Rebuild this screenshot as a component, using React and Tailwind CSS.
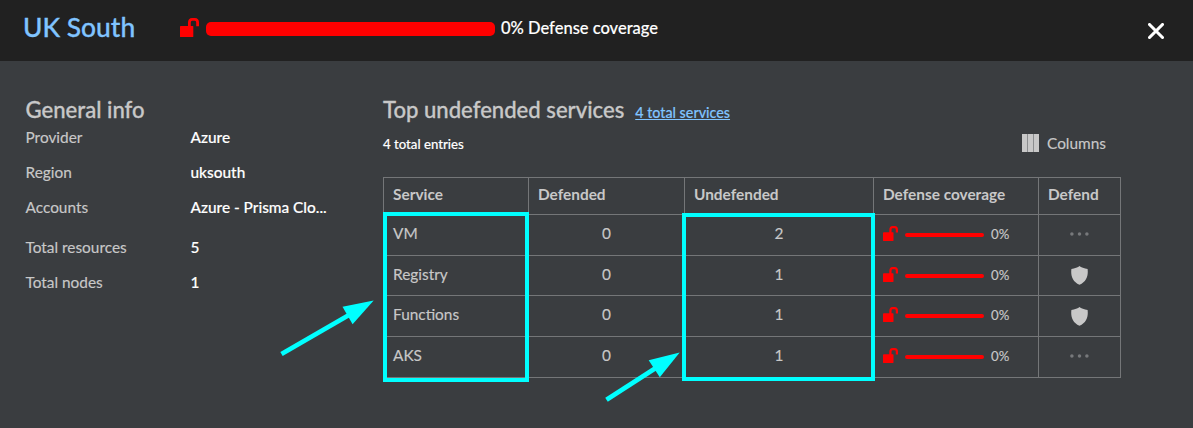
import React from "react";

function Unlock({ className }) {
  return (
    <svg viewBox="0 0 19 19" className={className} aria-hidden="true">
      <rect x="0" y="8" width="13.3" height="11" rx="0.6" fill="#ff0000" />
      <path d="M9.4 9V4.6Q9.4 1.4 12.2 1.4H14.8Q17.6 1.4 17.6 4.6V8.2" fill="none" stroke="#ff0000" strokeWidth="2.8" />
    </svg>
  );
}

function Shield() {
  return (
    <svg viewBox="0 0 17 19" className="h-[19px] w-[17px]" aria-hidden="true">
      <path d="M8.5 0C9.8 1.3 13.5 2.6 16.6 2.9C17.4 9.5 15.8 15.8 8.5 18.8C1.2 15.8 -0.4 9.5 0.4 2.9C3.5 2.6 7.2 1.3 8.5 0Z" fill="#c8c8c8" />
    </svg>
  );
}

function Dots() {
  return (
    <svg viewBox="0 0 19 4" className="mb-[3px] h-1 w-[19px]" aria-hidden="true">
      <circle cx="1.9" cy="2" r="1.75" fill="#77797b" />
      <circle cx="9.5" cy="2" r="1.75" fill="#77797b" />
      <circle cx="16.9" cy="2" r="1.75" fill="#77797b" />
    </svg>
  );
}

const info = [
  ["Provider", "Azure", "h-[35px]"],
  ["Region", "uksouth", "h-[35px]"],
  ["Accounts", "Azure - Prisma Clo...", "h-10"],
  ["Total resources", "5", "h-[35px]"],
  ["Total nodes", "1", "h-[35px]"],
];

const services = [
  { name: "VM", defended: 0, undefended: 2, shield: false },
  { name: "Registry", defended: 0, undefended: 1, shield: true },
  { name: "Functions", defended: 0, undefended: 1, shield: true },
  { name: "AKS", defended: 0, undefended: 1, shield: false },
];

const cell = "border-r border-b border-[#747678] flex";

export default function App() {
  return (
    <div className="relative h-[428px] w-[1193px] overflow-hidden bg-[#3a3d40] font-['Lato',sans-serif] text-[15.4px] text-[#c8c8c8] [-webkit-text-stroke:0.15px]">
      <header className="flex h-[61px] items-start bg-[#212121]">
        <h1 className="w-[156px] shrink-0 pt-[11px] pl-[23px] text-[26.4px] leading-8 font-medium whitespace-nowrap text-[#80c4ff] [-webkit-text-stroke:0.3px]">UK South</h1>
        <Unlock className="mt-[18px] ml-6 h-[19px] w-[19px]" />
        <div className="mt-[22px] ml-[7px] h-3.5 w-[289px] rounded-[5px] bg-[#ff0000]" />
        <span className="mt-[18px] ml-1.5 text-[16.5px] leading-5 font-medium whitespace-nowrap text-white">0% Defense coverage</span>
        <button className="mt-[23px] mr-[29px] ml-auto" aria-label="Close">
          <svg viewBox="0 0 16 16" className="h-4 w-4">
            <path d="M1.5 1.5L14.5 14.5M14.5 1.5L1.5 14.5" stroke="#fff" strokeWidth="3.1" strokeLinecap="round" />
          </svg>
        </button>
      </header>

      <main className="flex">
        <section className="w-[383px] shrink-0 pt-[35px] pl-[25.5px]">
          <h2 className="text-[22.1px] leading-7 font-medium [-webkit-text-stroke:0.3px]">General info</h2>
          <dl className="pt-[3px]">
            {info.map(([label, value, height]) => (
              <div key={label} className={"flex leading-5 whitespace-nowrap " + height}>
                <dt className="w-[165px]">{label}</dt>
                <dd className="font-medium text-white">{value}</dd>
              </div>
            ))}
          </dl>
        </section>

        <section className="w-[738px] pt-[35px]">
          <div className="flex items-baseline whitespace-nowrap">
            <h2 className="text-[22.1px] leading-7 font-medium [-webkit-text-stroke:0.3px]">Top undefended services</h2>
            <a className="ml-[11px] text-[14.3px] leading-5 font-medium text-[#80c4ff] underline">4 total services</a>
          </div>
          <div className="flex h-[53px] justify-between">
            <span className="pt-[11px] text-[13.2px] leading-[18px] font-medium text-white">4 total entries</span>
            <div className="mr-[15px] flex items-start gap-2 pt-2.5">
              <svg viewBox="0 0 17 18" className="h-[18px] w-[17px]" aria-hidden="true">
                <rect width="17" height="18" fill="#8b8d8f" />
                <path d="M0 0H5V18H0ZM6 0H11V18H6ZM12 0H17V18H12Z" fill="#c8c8c8" />
              </svg>
              <span className="-mt-px leading-5">Columns</span>
            </div>
          </div>

          <div className="grid grid-cols-[145px_156px_189px_165px_82px] grid-rows-[37px_41px_40px_41px_41px] border-t border-l border-[#747678] leading-5 whitespace-nowrap">
            {["Service", "Defended", "Undefended", "Defense coverage", "Defend"].map((title) => (
              <div key={title} className={cell + " pt-1.5 pl-[9px] font-bold [-webkit-text-stroke:0px]"}>{title}</div>
            ))}
            {services.map((s) => (
              <React.Fragment key={s.name}>
                <div className={cell + " items-center pb-1 pl-[9px]"}>{s.name}</div>
                <div className={cell + " items-center justify-center pb-1"}>{s.defended}</div>
                <div className={cell + " items-center justify-center pb-1"}>{s.undefended}</div>
                <div className={cell + " items-center pb-[3px] pl-[9px]"}>
                  <Unlock className="h-[15px] w-[15px]" />
                  <div className="mt-[3px] ml-[7px] h-1 w-[79px] rounded-sm bg-[#ff0000]" />
                  <span className="mt-px ml-[7px] text-[13.2px]">0%</span>
                </div>
                <div className={cell + " items-center justify-center"}>{s.shield ? <Shield /> : <Dots />}</div>
              </React.Fragment>
            ))}
          </div>
        </section>
      </main>

      <div className="absolute top-[212px] left-[383px] h-[170px] w-[146px] border-4 border-[#00ffff]" />
      <div className="absolute top-[213px] left-[682px] h-[168px] w-[193px] border-4 border-[#00ffff]" />
      <svg viewBox="0 0 100 60" className="absolute top-[298px] left-[278px] h-[60px] w-[100px]" aria-hidden="true">
        <path d="M3.5 56L71 17" stroke="#00ffff" strokeWidth="4.7" />
        <path d="M95.7 2.5L64.5 8.7L74.6 26.3Z" fill="#00ffff" />
      </svg>
      <svg viewBox="0 0 80 55" className="absolute top-[350px] left-[603px] h-[55px] w-20" aria-hidden="true">
        <path d="M3.5 49.7L52 18.5" stroke="#00ffff" strokeWidth="4.7" />
        <path d="M76.7 2.5L45.7 10.3L56.8 27.3Z" fill="#00ffff" />
      </svg>
    </div>
  );
}
